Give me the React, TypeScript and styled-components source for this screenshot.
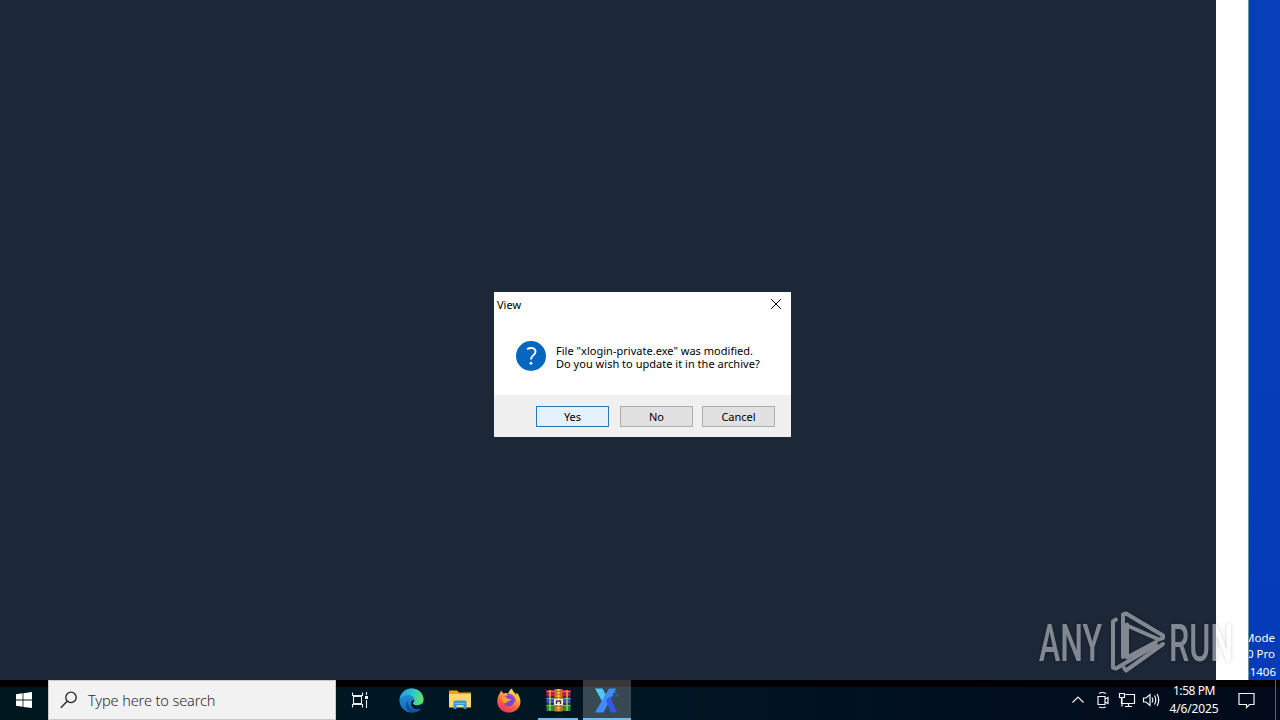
import React from "react";
import styled, { createGlobalStyle } from "styled-components";

const App = () => {
  return (
    <Screen>
      <GlobalStyle />
      <Desktop>
        <AppWindow />
        <WindowEdge />
        <Wallpaper>
          <BuildLine>Test Mode</BuildLine>
          <BuildLine>Windows 10 Pro</BuildLine>
          <BuildLine $last>Build 19041.vb_release.191206-1406</BuildLine>
        </Wallpaper>
      </Desktop>

      <Taskbar>
        <StartButton>
          <WindowsIcon />
        </StartButton>
        <Search>
          <SearchIcon />
          <SearchText>Type here to search</SearchText>
        </Search>
        <TaskButton>
          <TaskViewIcon />
        </TaskButton>
        <Apps>
          <TaskButton>
            <EdgeIcon />
          </TaskButton>
          <TaskButton>
            <FolderIcon />
          </TaskButton>
          <TaskButton>
            <FirefoxIcon />
          </TaskButton>
          <TaskButton>
            <WinrarIcon />
            <Indicator $width={40} />
          </TaskButton>
          <TaskButton $active>
            <XIcon />
            <Indicator $width={48} />
          </TaskButton>
        </Apps>
        <Tray>
          <TrayIcons />
          <Clock>
            <ClockLine $spacing={-0.42}>1:58 PM</ClockLine>
            <ClockLine $spacing={-0.12}>4/6/2025</ClockLine>
          </Clock>
          <NoticeIcon />
          <ShowDesktop />
        </Tray>
      </Taskbar>

      <Dialog>
        <TitleBar>
          <Title>View</Title>
          <CloseIcon />
        </TitleBar>
        <Body>
          <QuestionIcon />
          <Message>
            <MessageLine $spacing={0.02}>File "xlogin-private.exe" was modified.</MessageLine>
            <MessageLine $spacing={0.02}>Do you wish to update it in the archive?</MessageLine>
          </Message>
        </Body>
        <Footer>
          <Button $primary>Yes</Button>
          <Button $gap={11}>No</Button>
          <Button $gap={9}>Cancel</Button>
        </Footer>
      </Dialog>

      <Watermark />
    </Screen>
  );
};

export default App;

const WindowsIcon = () => (
  <svg width="16" height="16" viewBox="0 0 16 16" fill="#fff">
    <path d="M0 2.3 6.6 1.3V7.6H0zM7.4 1.2 16 0V7.6H7.4zM0 8.4H6.6V14.8L0 13.8zM7.4 8.4H16V16L7.4 14.9z" />
  </svg>
);

const SearchIcon = () => (
  <svg width="18" height="18" viewBox="0 0 18 18" fill="none" stroke="#222" strokeWidth="1.3">
    <circle cx="11" cy="6.4" r="5.2" />
    <path d="M7.2 10.3 .8 16.7" />
  </svg>
);

const TaskViewIcon = () => (
  <svg width="18" height="18" viewBox="0 0 18 18" fill="none" stroke="#e8edf0" strokeWidth="1.1">
    <path d="M1.5 1.5V4.5H11.5V1.5M1.5 16.5V13.5H11.5V16.5M2.5 5.5H10.5V12.5H2.5zM15.5 1V4M15.5 9V17" />
    <path d="M14 5H17V8H14z" fill="#fff" stroke="none" />
  </svg>
);

const EdgeIcon = () => (
  <svg width="25" height="25" viewBox="0 0 25 25">
    <defs>
      <linearGradient id="edgeTop" x1="0" y1=".3" x2="1" y2=".5">
        <stop offset="0" stopColor="#2399de" />
        <stop offset=".5" stopColor="#2cc5cf" />
        <stop offset="1" stopColor="#67df62" />
      </linearGradient>
      <linearGradient id="edgeLow" x1="0" y1="0" x2="0" y2="1">
        <stop offset="0" stopColor="#2299dc" />
        <stop offset="1" stopColor="#1668b8" />
      </linearGradient>
    </defs>
    <circle cx="12.5" cy="12.5" r="12" fill="url(#edgeLow)" />
    <path d="M.6 11.5C1.500 4.500 6.500.5 12.600.5c7 0 11.900 5 11.900 10.500 0 4-3 6.200-6.300 6.200-2.800 0-4.200-1-4.200-2 0-.8 1.400-1.200 1.400-3.400 0-2.300-2.400-4.700-6.400-4.700-3.500 0-6.600 1.800-8.400 4.400z" fill="url(#edgeTop)" />
    <path d="M9.200 12.500c-1.200 5 2.800 9.600 8 9.600 2.300 0 4-.8 5.200-1.600-2 2.700-5.500 4.200-9 4-6-.7-8.400-8-4.200-12z" fill="#124f94" />
    <path d="M13.900 15.200c0 1 1.500 2.200 4.300 2.200 2.400 0 4.300-1 5.300-2.300v4c-1.500 1.700-4 2.400-6.300 2.100-4-.4-6.400-4.300-4.700-7.700 1-1.500 3.200-1.500 2.900-.5-.3 1-1.500 1.400-1.500 2.200z" fill="#03192a" />
  </svg>
);

const FolderIcon = () => (
  <svg width="22" height="20" viewBox="0 0 22 20">
    <path d="M0 1.500Q0 .5 1 .5H8L10 2.500H22V7H0z" fill="#e9a21d" />
    <path d="M0 4H22V17.500H0z" fill="#ffd869" />
    <path d="M4.500 19V12Q4.500 10.500 6 10.500H16Q17.500 10.500 17.500 12V19H14.500V15H7.500V19z" fill="#3d95d5" />
    <path d="M6 13.500H16" stroke="#78b9e7" />
  </svg>
);

const FirefoxIcon = () => (
  <svg width="24" height="25" viewBox="0 0 24 25">
    <defs>
      <linearGradient id="fox" x1=".8" y1="0" x2=".3" y2="1">
        <stop offset="0" stopColor="#fff14a" />
        <stop offset=".35" stopColor="#ffb02e" />
        <stop offset=".65" stopColor="#ff623b" />
        <stop offset="1" stopColor="#ef2d76" />
      </linearGradient>
    </defs>
    <path d="M3 5C3.500 3.500 4 3 4.500 2.500 5 4 5.500 4.500 6.500 5.500 8.500 4.500 10 5 11.500 5.500 11.500 3.500 13 1.500 15 .5 15.500 3.500 18 4.500 19 7L19.700 4.500C25 11 24.500 18 19.500 22 14 26.500 4.500 25 1.200 18-.5 13.500.2 8.500 3 5z" fill="url(#fox)" />
    <circle cx="11.800" cy="12.800" r="5.500" fill="#7447dd" />
    <path d="M4.500 9.500C7.500 8.500 9.500 9 11 10.700L14.500 11C13.500 13 11.500 12.700 10 14 9 15.500 7 15.700 6 14z" fill="#ff9b31" />
    <path d="M10 6.800C14 5.500 18.500 9 17.800 14" fill="none" stroke="#a43fb4" strokeWidth="1.500" />
  </svg>
);

const WinrarIcon = () => (
  <svg width="25" height="23" viewBox="0 0 25 23">
    <path d="M.5 1H24.500V7.500H.5z" fill="#b51f45" />
    <path d="M.5 8.500H24.500V14.500H.5z" fill="#2d59b7" />
    <path d="M.5 15.500H24.500V22H.5z" fill="#198c3d" />
    <path d="M.5 2.500H24.500" stroke="#e7658b" />
    <path d="M.5 9.500H24.500" stroke="#699ce4" />
    <path d="M.5 16.500H24.500" stroke="#5fc47a" />
    <path d="M4 1V22M21 1V22" stroke="#d4b44b" strokeWidth="1.500" />
    <path d="M8.500 0H16.500V22.500H8.500z" fill="#c7751d" />
    <path d="M12.500 0V22" stroke="#ffd25a" strokeWidth="2" strokeDasharray="2 1" />
    <path d="M8 10H17V16H8z" fill="#fff2db" />
    <path d="M10.500 15V12H14.500V15" fill="none" stroke="#4d3529" strokeWidth="1.500" />
  </svg>
);

const XIcon = () => (
  <svg width="24" height="25" viewBox="0 0 24 25">
    <path d="M0 .5H7.500L12 9 7.800 14.500z" fill="#4ec9fa" />
    <path d="M14 .5H21L8.500 24.500H0z" fill="#438cf5" />
    <path d="M11 12 15 8.500 22 24.500H15.500z" fill="#3159e5" />
    <path d="M19 3H21V5H19zM20.500 6.500H22.500V8.500H20.500zM17.500 7H19V8.500H17.500z" fill="#2467dc" />
  </svg>
);

const TrayIcons = () => (
  <svg width="90" height="20" viewBox="0 0 90 20" fill="none" stroke="#f2f4f6" strokeWidth="1.200">
    <path d="M1.500 12.500 7 7 12.500 12.500" />
    <path d="M27 6.500H34V14.500H27zM34 9 37 7.500V13.500L34 12M28 3.500Q31 1.500 35 3.500M28 17Q31 18.500 35 17" />
    <path d="M54.500 4.500H63.500V13.500H50.500V8M54 16.500H61M57.500 13.500V16.500M48.500 3.500H53.500V7.500H48.500zM51 7.500V16.500" />
    <path d="M72.500 8H75L79 4.500V15.500L75 12H72.500zM81 7.500Q82.500 10 81 12.500M83.500 5.500Q86 10 83.500 14.500M86 4Q89.500 10 86 16" />
  </svg>
);

const NoticeIcon = () => (
  <svg width="17" height="17" viewBox="0 0 17 17" fill="none" stroke="#f2f4f6" strokeWidth="1.200">
    <path d="M1 1.500H16V12.500H11.500L8.500 15.500V12.500H1z" />
  </svg>
);

const CloseIcon = () => (
  <svg width="10" height="10" viewBox="0 0 10 10" stroke="#000">
    <path d="M0 0 10 10M10 0 0 10" />
  </svg>
);

const QuestionIcon = () => (
  <svg width="30" height="30" viewBox="0 0 30 30">
    <circle cx="15" cy="15" r="15" fill="#0567be" />
    <path d="M11 8.300C15 5.800 19.500 7 19.500 10.700 19.500 14.200 15 14.200 15 18.500" fill="none" stroke="#fff" strokeWidth="1.900" />
    <circle cx="15" cy="22.300" r="1.400" fill="#fff" />
  </svg>
);

const Watermark = () => (
  <WatermarkSvg width="200" height="70" viewBox="0 0 200 70">
    <g fill="#fff" fontFamily="Roboto, sans-serif" fontSize="52" fontWeight="500">
      <text x="3" y="54.500" textLength="63" lengthAdjust="spacingAndGlyphs">ANY</text>
      <text x="133" y="54.500" textLength="64" lengthAdjust="spacingAndGlyphs">RUN</text>
    </g>
    <g fill="none" stroke="#fff" strokeWidth="4" strokeLinejoin="round" strokeLinecap="round">
      <path d="M80 13.500 77 15.500V61.500L80 62.500 120 39" />
      <path d="M87 51V8.500L90 7.500 127 29.500V32L123 33.500 91 19.500" />
      <path d="M91 18.500V51.500L120 36M127 38 90 64.500 88 62" />
    </g>
  </WatermarkSvg>
);

const GlobalStyle = createGlobalStyle`
  body {
    margin: 0;
    overflow: hidden;
  }
`;

const Screen = styled.div`
  display: flex;
  flex-direction: column;
  font-family: "Noto Sans", sans-serif;
  height: 720px;
  position: relative;
  width: 1280px;
`;

const Desktop = styled.div`
  display: flex;
  height: 680px;
`;

const AppWindow = styled.div`
  background: #1c2737;
  width: 1216px;
`;

const WindowEdge = styled.div`
  background: #fff;
  border-right: 1px solid #6d94a5;
  box-sizing: border-box;
  width: 33px;
`;

const Wallpaper = styled.div`
  align-items: flex-end;
  background: linear-gradient(#063fb8, #053bb8);
  box-sizing: border-box;
  display: flex;
  flex-direction: column;
  justify-content: flex-end;
  overflow: hidden;
  padding-right: 5px;
  width: 31px;
`;

const BuildLine = styled.div<{ $last?: boolean }>`
  color: #fff;
  font-size: 11.5px;
  line-height: 16px;
  margin-right: ${({ $last }) => ($last ? "-1px" : "0")};
  margin-top: ${({ $last }) => ($last ? "2px" : "0")};
  white-space: nowrap;
`;

const Taskbar = styled.div`
  background: linear-gradient(#000 0 7px, transparent 7px),
    linear-gradient(90deg, #001720, #001623 50%, #020a1a);
  display: flex;
  height: 40px;
`;

const StartButton = styled.div`
  align-items: center;
  display: flex;
  justify-content: center;
  width: 48px;
`;

const Search = styled.div`
  align-items: center;
  background: #f2f2f2;
  border: 1px solid #c9c9c9;
  box-sizing: border-box;
  display: flex;
  gap: 10px;
  padding-left: 11px;
  width: 288px;
`;

const SearchText = styled.span`
  color: #2b2b2b;
  font-size: 14.500px;
  font-weight: 300;
  letter-spacing: -0.1px;
`;

const Apps = styled.div`
  display: flex;
  gap: 1px;
  margin-left: 3px;
`;

const TaskButton = styled.div<{ $active?: boolean }>`
  align-items: center;
  background: ${({ $active }) => ($active ? "#ffffff38" : "none")};
  display: flex;
  flex-direction: column;
  justify-content: center;
  position: relative;
  width: 48px;
`;

const Indicator = styled.div<{ $width: number }>`
  background: #76b9ed;
  bottom: 0;
  height: 2px;
  position: absolute;
  width: ${({ $width }) => $width}px;
`;

const Tray = styled.div`
  align-items: center;
  display: flex;
  margin-left: auto;
`;

const Clock = styled.div`
  align-items: center;
  display: flex;
  flex-direction: column;
  margin: 0 20px 0 9px;
  width: 48px;
`;

const ClockLine = styled.span<{ $spacing: number }>`
  color: #fff;
  font-size: 12px;
  letter-spacing: ${({ $spacing }) => $spacing}px;
  line-height: 18px;
  white-space: nowrap;
`;

const ShowDesktop = styled.div`
  border-left: 1px solid #5b626c;
  height: 40px;
  margin-left: 20px;
  width: 4px;
`;

const Dialog = styled.div`
  background: #fff;
  display: flex;
  flex-direction: column;
  height: 145px;
  left: 494px;
  position: absolute;
  top: 292px;
  width: 297px;
`;

const TitleBar = styled.div`
  align-items: center;
  display: flex;
  height: 24px;
  justify-content: space-between;
  padding: 0 10px 0 3px;
`;

const Title = styled.span`
  font-size: 11px;
`;

const Body = styled.div`
  align-items: center;
  display: flex;
  gap: 10px;
  height: 79px;
  padding-left: 22px;
`;

const Message = styled.div`
  display: flex;
  flex-direction: column;
  padding-top: 2px;
`;

const MessageLine = styled.span<{ $spacing: number }>`
  font-size: 11px;
  letter-spacing: ${({ $spacing }) => $spacing}px;
  line-height: 13px;
  white-space: nowrap;
`;

const Footer = styled.div`
  align-items: flex-start;
  background: #f0f0f0;
  box-sizing: border-box;
  display: flex;
  height: 42px;
  padding: 11px 0 0 42px;
`;

const Button = styled.button<{ $primary?: boolean; $gap?: number }>`
  background: ${({ $primary }) => ($primary ? "#e5f1fb" : "#e1e1e1")};
  border: 1px solid ${({ $primary }) => ($primary ? "#2678b9" : "#adadad")};
  color: #000;
  font-family: inherit;
  font-size: 11px;
  height: 21px;
  line-height: 19px;
  margin: 0 0 0 ${({ $gap }) => $gap || 0}px;
  padding: 0;
  width: 73px;
`;

const WatermarkSvg = styled.svg`
  filter: drop-shadow(0 0 2px #00000060);
  left: 1036px;
  opacity: 0.45;
  position: absolute;
  top: 606px;
`;
